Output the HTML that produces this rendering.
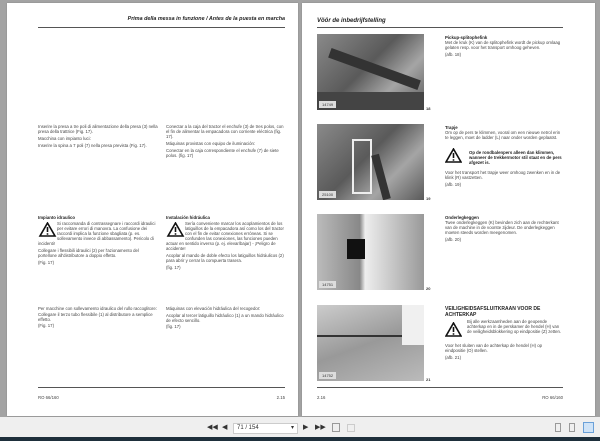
<!DOCTYPE html>
<html><head><meta charset="utf-8"><style>
*{margin:0;padding:0;box-sizing:border-box}
body{width:600px;height:441px;background:#a3a3a3;position:relative;overflow:hidden;font-family:"Liberation Sans",sans-serif;color:#333}
.pg{position:absolute;background:#fff;top:3px;height:413px;box-shadow:0 0 1px #777}
.a{position:absolute;font-size:4.3px;line-height:5px;color:#444}
.b{font-weight:bold;color:#222}
.hr{position:absolute;height:1px;background:#555}
.ph{position:absolute;width:107px;height:76px;background:linear-gradient(135deg,#8a8a8a,#5a5a5a 45%,#a5a5a5 70%,#5a5a5a);overflow:hidden}
.ph i{position:absolute;display:block}
.lbl{position:absolute;left:2px;bottom:2px;background:#ddd;font-size:4px;padding:1px 3px;color:#333}
.num{position:absolute;font-size:4px;font-weight:bold;color:#333}
.tri{position:absolute;width:17px;height:15px}
.ft{float:left;width:19px;height:15px;margin-top:1px}
.tb{position:absolute;left:0;top:417px;width:600px;height:20px;background:#efefef}
.ic{position:absolute;font-size:7px;color:#333;top:423px}
</style></head><body>
<div class="pg" style="left:7px;width:291px"></div>
<div class="pg" style="left:302px;width:293px"></div>

<div class="a b" style="left:100px;top:17px;width:185px;text-align:right;font-size:5.4px;font-style:italic;white-space:nowrap">Prima della messa in funzione / Antes de la puesta en marcha</div>
<div class="hr" style="left:38px;top:27px;width:247px"></div>

<div class="a" style="left:38px;top:124px;width:120px">Inserire la presa a tre poli di alimentazione della presa (3) nella presa della trattrice (Fig. 17).<br><span style="line-height:9px">Macchina con impianto luci:</span><br>Inserire la spina a 7 poli (7) nella presa prevista (Fig. 17).</div>
<div class="a" style="left:166px;top:124px;width:120px">Conectar a la caja del tractor el enchufe (3) de tres polos, con el fin de alimentar la empacadora con corriente eléctrica (fig. 17).<br><span style="line-height:9px">Máquinas provistas con equipo de iluminación:</span><br>Conectar en la caja correspondiente el enchufe (7) de siete polos. (fig. 17)</div>

<div class="a b" style="left:38px;top:215px">Impianto idraulico</div>
<div class="a" style="left:38px;top:221px;width:120px"><svg class="ft" viewBox="0 0 17 15"><path d="M8.5 1L16 14H1Z" fill="#fff" stroke="#111" stroke-width="1.6"/><path d="M8.5 5v5M8.5 11.3v1.4" stroke="#111" stroke-width="1.6"/></svg>Si raccomanda di contrassegnare i raccordi idraulici per evitare errori di manovra. La confusione dei raccordi implica la funzione sbagliata (p. es. sollevamento invece di abbassamento). Pericolo di incidenti!<span style="display:block;clear:both;margin-top:2px">Collegare i flessibili idraulici (2) per l'azionamento del portellone all'distributore a doppio effetto.</span><span style="display:block;margin-top:2px">(Fig. 17)</span></div>
<div class="a b" style="left:166px;top:215px">Instalación hidráulica</div>
<div class="a" style="left:166px;top:221px;width:120px"><svg class="ft" viewBox="0 0 17 15"><path d="M8.5 1L16 14H1Z" fill="#fff" stroke="#111" stroke-width="1.6"/><path d="M8.5 5v5M8.5 11.3v1.4" stroke="#111" stroke-width="1.6"/></svg>Sería conveniente marcar los acoplamientos de los latiguillos de la empacadora así como los del tractor con el fin de evitar conexiones erróneas. Si se confunden las conexiones, las funciones pueden actuar en sentido inverso (p. ej. elevar/bajar) - ¡Peligro de accidente!<span style="display:block;clear:both;margin-top:2px">Acoplar al mando de doble efecto los latiguillos hidráulicos (2) para abrir y cerrar la compuerta trasera.</span><span style="display:block;margin-top:2px">(fig. 17)</span></div>

<div class="a" style="left:38px;top:306px;width:120px">Per macchine con sollevamento idraulico del rullo raccoglitore:<br><span style="display:block;margin-top:1px">Collegare il terzo tubo flessibile (1) al distributore a semplice effetto.</span><span style="display:block;margin-top:1px">(Fig. 17)</span></div>
<div class="a" style="left:166px;top:306px;width:120px">Máquinas con elevación hidráulica del recogedor:<br><span style="display:block;margin-top:2px">Acoplar al tercer latiguillo hidráulico (1) a un mando hidráulico de efecto sencillo.</span><span style="display:block;margin-top:1px">(fig. 17)</span></div>

<div class="hr" style="left:38px;top:387px;width:247px"></div>
<div class="a" style="left:38px;top:395px">RO 66/160</div>
<div class="a" style="left:265px;top:395px;width:20px;text-align:right">2.15</div>

<div class="a b" style="left:317px;top:19px;font-size:6px;font-style:italic">Vöör de inbedrijfstelling</div>
<div class="hr" style="left:317px;top:27px;width:246px"></div>

<div class="ph" style="left:317px;top:34px"><i style="left:10px;top:30px;width:95px;height:10px;background:#333;transform:rotate(20deg)"></i><i style="left:0;top:58px;width:107px;height:18px;background:#444"></i><div class="lbl">14749</div></div>
<div class="num" style="left:426px;top:106px">18</div>
<div class="ph" style="left:317px;top:124px"><i style="left:35px;top:15px;width:20px;height:55px;border:2px solid #eee"></i><i style="left:60px;top:30px;width:8px;height:46px;background:#333;transform:rotate(-15deg)"></i><div class="lbl">25100</div></div>
<div class="num" style="left:426px;top:196px">19</div>
<div class="ph" style="left:317px;top:214px;background:linear-gradient(90deg,#bbb,#888 40%,#eee 45%,#999)"><i style="left:30px;top:25px;width:18px;height:20px;background:#111"></i><div class="lbl">14751</div></div>
<div class="num" style="left:426px;top:286px">20</div>
<div class="ph" style="left:317px;top:305px;background:linear-gradient(160deg,#ccc,#999 50%,#bbb)"><i style="left:0;top:30px;width:107px;height:2px;background:#333"></i><i style="left:85px;top:0;width:22px;height:40px;background:#f0f0f0"></i><div class="lbl">14752</div></div>
<div class="num" style="left:426px;top:377px">21</div>

<div class="a" style="left:445px;top:35px;width:118px"><span class="b">Pickup-splitophefink</span><br>Met de kruk (K) van de splitophefink wordt de pickup omlaag gelaten resp. voor het transport omhoog geheven.<br><span style="display:block;margin-top:2px">(afb. 18)</span></div>
<div class="a" style="left:445px;top:125px;width:118px"><span class="b">Trapje</span><br>Om op de pers te klimmen, vooral om een nieuwe netrol erin te leggen, moet de ladder (L) naar onder worden geplaatst.</div>
<svg class="tri" style="left:445px;top:148px" viewBox="0 0 17 15"><path d="M8.5 1L16 14H1Z" fill="#fff" stroke="#111" stroke-width="1.6"/><path d="M8.5 5v5M8.5 11.3v1.4" stroke="#111" stroke-width="1.6"/></svg>
<div class="a b" style="left:469px;top:150px;width:94px">Op de rondbalenpers alleen dan klimmen, wanneer de trekkermotor stil staat en de pers afgezet is.</div>
<div class="a" style="left:445px;top:170px;width:118px">Voor het transport het trapje weer omhoog zwenken en in de klink (R) vastzetten.<br><span style="display:block;margin-top:2px">(afb. 19)</span></div>
<div class="a" style="left:445px;top:215px;width:118px"><span class="b">Onderlegkeggen</span><br>Twee onderlegkeggen (K) bevinden zich aan de rechterkant van de machine in de voorste zijdeur. De onderlegkeggen moeten steeds worden meegenomen.<br><span style="display:block;margin-top:2px">(afb. 20)</span></div>
<div class="a b" style="left:445px;top:306px;width:118px;font-size:5px;line-height:6px">VEILIGHEIDSAFSLUITKRAAN VOOR DE ACHTERKAP</div>
<svg class="tri" style="left:445px;top:322px" viewBox="0 0 17 15"><path d="M8.5 1L16 14H1Z" fill="#fff" stroke="#111" stroke-width="1.6"/><path d="M8.5 5v5M8.5 11.3v1.4" stroke="#111" stroke-width="1.6"/></svg>
<div class="a" style="left:467px;top:319px;width:96px">Bij alle werkzaamheden aan de geopende achterkap en in de perskamer de hendel (H) van de veiligheidsblokkering op eindpositie (Z) zetten.</div>
<div class="a" style="left:445px;top:343px;width:118px">Voor het sluiten van de achterkap de hendel (H) op eindpositie (O) stellen.<br><span style="display:block;margin-top:2px">(afb. 21)</span></div>

<div class="hr" style="left:317px;top:387px;width:246px"></div>
<div class="a" style="left:317px;top:395px">2.16</div>
<div class="a" style="left:520px;top:395px;width:43px;text-align:right">RO 66/160</div>

<div class="tb"></div>
<div class="ic" style="left:207px">◀◀</div>
<div class="ic" style="left:222px">◀</div>
<div style="position:absolute;left:233px;top:423px;width:65px;height:11px;background:#fff;border:1px solid #ccc;font-size:6px;line-height:9px;padding-left:3px;color:#333">71 / 154<span style="position:absolute;right:3px">▾</span></div>
<div class="ic" style="left:303px">▶</div>
<div class="ic" style="left:315px">▶▶</div>
<div style="position:absolute;left:332px;top:423px;width:8px;height:9px;border:1px solid #999"></div>
<div style="position:absolute;left:347px;top:424px;width:8px;height:8px;border:1px solid #ccc"></div>
<div style="position:absolute;left:555px;top:423px;width:6px;height:9px;border:1px solid #999"></div>
<div style="position:absolute;left:569px;top:423px;width:6px;height:9px;border:1px solid #999"></div>
<div style="position:absolute;left:583px;top:422px;width:11px;height:11px;background:#cfe3f7;border:1px solid #6aa0d8"></div>
<div style="position:absolute;left:0;top:437px;width:600px;height:4px;background:#1e2f3b"></div>
</body></html>
